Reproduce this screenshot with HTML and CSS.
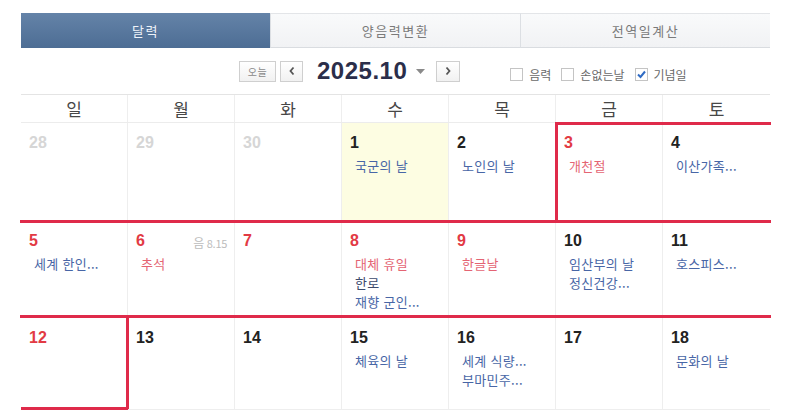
FILE: index.html
```html
<!DOCTYPE html>
<html lang="ko">
<head>
<meta charset="utf-8">
<title>달력</title>
<link rel="stylesheet" href="styles.css">
</head>
<body>
<div class="page">
  <div class="tabs">
    <div class="tab active">달력</div>
    <div class="tab">양음력변환</div>
    <div class="tab">전역일계산</div>
  </div>

  <div class="toolbar">
    <button class="btn btn-today">오늘</button>
    <button class="btn btn-arrow"><svg width="8" height="10" viewBox="0 0 8 10"><polyline points="5.5,1.5 2.5,5 5.5,8.5" fill="none" stroke="#555" stroke-width="1.8"/></svg></button>
    <div class="title">2025.10</div>
    <svg class="caret" width="9" height="6" viewBox="0 0 9 6"><polygon points="0,0 9,0 4.5,5" fill="#8a8a8a"/></svg>
    <button class="btn btn-arrow btn-next"><svg width="8" height="10" viewBox="0 0 8 10"><polyline points="2.5,1.5 5.5,5 2.5,8.5" fill="none" stroke="#555" stroke-width="1.8"/></svg></button>

    <div class="opts">
      <label class="opt"><span class="box"></span>음력</label>
      <label class="opt"><span class="box"></span>손없는날</label>
      <label class="opt"><span class="box checked"><svg width="11" height="11" viewBox="0 0 11 11"><polyline points="2,5.5 4.5,8 9,2.5" fill="none" stroke="#2f6bc4" stroke-width="2"/></svg></span>기념일</label>
    </div>
  </div>

  <div class="weekdays">
    <div class="wd">일</div>
    <div class="wd">월</div>
    <div class="wd">화</div>
    <div class="wd">수</div>
    <div class="wd">목</div>
    <div class="wd">금</div>
    <div class="wd">토</div>
  </div>

  <div class="grid">
    <!-- week 1 -->
    <div class="cell"><div class="num other">28</div></div>
    <div class="cell"><div class="num other">29</div></div>
    <div class="cell"><div class="num other">30</div></div>
    <div class="cell today"><div class="num">1</div><div class="ev">국군의 날</div></div>
    <div class="cell"><div class="num">2</div><div class="ev">노인의 날</div></div>
    <div class="cell hl hl-t hl-l"><div class="num red">3</div><div class="ev hol">개천절</div></div>
    <div class="cell hl hl-t"><div class="num">4</div><div class="ev">이산가족...</div></div>

    <!-- week 2 -->
    <div class="cell hl hl-t hl-b"><div class="num red">5</div><div class="ev">세계 한인...</div></div>
    <div class="cell hl hl-t hl-b"><div class="num red">6</div><div class="lunar"><span class="lunar-k">음</span> 8.15</div><div class="ev hol">추석</div></div>
    <div class="cell hl hl-t hl-b"><div class="num red">7</div></div>
    <div class="cell hl hl-t hl-b"><div class="num red">8</div><div class="ev hol">대체 휴일</div><div class="ev dark">한로</div><div class="ev">재향 군인...</div></div>
    <div class="cell hl hl-t hl-b"><div class="num red">9</div><div class="ev hol">한글날</div></div>
    <div class="cell hl hl-t hl-b"><div class="num">10</div><div class="ev">임산부의 날</div><div class="ev">정신건강...</div></div>
    <div class="cell hl hl-t hl-b"><div class="num">11</div><div class="ev">호스피스...</div></div>

    <!-- week 3 -->
    <div class="cell hl hl-r hl-b2"><div class="num red">12</div></div>
    <div class="cell"><div class="num">13</div></div>
    <div class="cell"><div class="num">14</div></div>
    <div class="cell"><div class="num">15</div><div class="ev">체육의 날</div></div>
    <div class="cell"><div class="num">16</div><div class="ev">세계 식량...</div><div class="ev">부마민주...</div></div>
    <div class="cell"><div class="num">17</div></div>
    <div class="cell"><div class="num">18</div><div class="ev">문화의 날</div></div>
  </div>
</div>
</body>
</html>
```

FILE: styles.css
```css
* { box-sizing: border-box; }

html, body {
  margin: 0;
  padding: 0;
  background: #ffffff;
}

body {
  font-family: "Noto Sans CJK KR", "Noto Sans", sans-serif;
  color: #333;
  overflow: hidden;
}

.page {
  width: 792px;
  height: 412px;
  padding: 13px 22px 0 21px;
}

/* tabs */
.tabs {
  display: flex;
  height: 35px;
}

.tab {
  flex: 1;
  display: flex;
  align-items: center;
  justify-content: center;
  font-size: 13px;
  letter-spacing: 1.5px;
  color: #7a7a7a;
  background: linear-gradient(#f9fafb, #f1f2f4);
  border-top: 1px solid #e3e5e8;
  border-bottom: 1px solid #d9dce0;
  border-left: 1px solid #dcdfe3;
}

.tab.active {
  color: #eef3f9;
  background: linear-gradient(#6483a8, #4d6d94);
  border: none;
}

/* toolbar */
.toolbar {
  display: flex;
  align-items: center;
  height: 47px;
  padding-left: 218px;
  border-bottom: 1px solid #e4e4e4;
}

.btn {
  height: 21px;
  margin: 0;
  padding: 0;
  border: 1px solid #cfcfcf;
  background: linear-gradient(#ffffff, #f1f1f1);
  display: flex;
  align-items: center;
  justify-content: center;
  font-family: "Noto Sans CJK KR", sans-serif;
}

.btn-today {
  width: 37px;
  font-size: 10px;
  color: #8a8a8a;
  letter-spacing: 0.5px;
}

.btn-arrow {
  width: 23px;
  margin-left: 4px;
}

.btn-next {
  margin-left: 11px;
  width: 24px;
}

.title {
  margin-left: 14px;
  font-family: "Liberation Sans", Arial, sans-serif;
  font-weight: bold;
  font-size: 24px;
  letter-spacing: 0.5px;
  color: #2b2e4a;
  line-height: 24px;
}

.caret {
  margin-left: 9px;
  margin-top: 1px;
}

.opts {
  display: flex;
  align-items: center;
  margin-left: 50px;
  margin-top: 7px;
}

.opt {
  display: flex;
  align-items: center;
  font-size: 12px;
  color: #6a6a6a;
  margin-right: 10px;
}

.box {
  width: 13px;
  height: 13px;
  border: 1px solid #c4c4c4;
  background: #fff;
  margin-right: 6px;
  display: flex;
  align-items: center;
  justify-content: center;
}

/* weekdays */
.weekdays {
  display: grid;
  grid-template-columns: repeat(7, 107px);
  height: 28px;
  border-bottom: 1px solid #ececec;
}

.wd {
  display: flex;
  align-items: center;
  justify-content: center;
  font-size: 17px;
  color: #474747;
  border-right: 1px solid #eeeeee;
}

.wd:last-child { border-right: none; }

/* grid */
.grid {
  display: grid;
  grid-template-columns: repeat(7, 107px);
  grid-template-rows: 98px 97px 92px;
}

.cell {
  position: relative;
  padding: 10px 0 0 8px;
  border-right: 1px solid #eeeeee;
  border-bottom: 1px solid #eeeeee;
}

.cell:nth-child(7n) { border-right: none; }

.cell.today { background: #fdfde2; }

.num {
  font-family: "Liberation Sans", Arial, sans-serif;
  font-weight: bold;
  font-size: 16px;
  line-height: 20px;
  color: #222;
}

.num.other { color: #d6d6d6; }
.num.red { color: #e23a44; }

.lunar {
  position: absolute;
  top: 13px;
  right: 7px;
  font-size: 11px;
  color: #bcbcbc;
  letter-spacing: -0.3px;
}

.lunar-k { font-size: 12px; }

.ev {
  padding-left: 5px;
  margin-top: 3px;
  font-size: 13px;
  letter-spacing: 0.3px;
  line-height: 19px;
  color: #4866a6;
  white-space: nowrap;
}

.ev + .ev { margin-top: 0; }

.ev.hol { color: #e46473; }
.ev.dark { color: #3c4a6c; }

/* highlighted holiday range outline */
.hl::after {
  content: "";
  position: absolute;
  top: -1px;
  left: -1px;
  right: -1px;
  bottom: -1px;
  border: 0 solid #df2a4a;
  pointer-events: none;
}

.hl-t::after { border-top-width: 3px; }
.hl-b::after { border-bottom-width: 3px; }
.hl-l::after { border-left-width: 3px; }
.hl-r::after { border-right-width: 3px; left: 0; right: -2px; }
.hl-b2::after { border-bottom-width: 3px; }
```
